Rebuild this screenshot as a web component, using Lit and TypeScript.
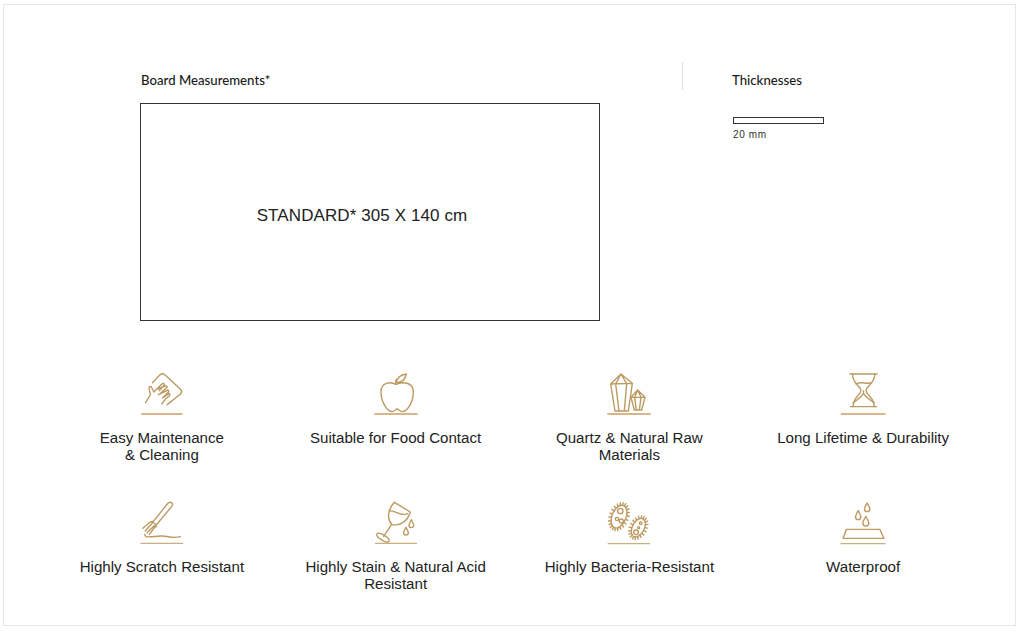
import { LitElement, html, css, svg } from "lit";
import { customElement } from "lit/decorators.js";

const drop = (x: number, top: number, bot: number, r: number) =>
  svg`<path d="M${x} ${top} C${x + r * 0.5} ${top + (bot - top) * 0.3} ${x + r} ${bot - r * 1.6} ${x + r} ${bot - r} A${r} ${r} 0 0 1 ${x - r} ${bot - r} C${x - r} ${bot - r * 1.6} ${x - r * 0.5} ${top + (bot - top) * 0.3} ${x} ${top}Z"/>`;

const microbe = (cx: number, cy: number, rx: number, ry: number, rot: number, n: number) => {
  const spikes = [];
  for (let i = 0; i < n; i++) {
    const a = (i / n) * Math.PI * 2;
    const x1 = cx + rx * Math.cos(a), y1 = cy + ry * Math.sin(a);
    const x2 = cx + (rx + 8) * Math.cos(a), y2 = cy + (ry + 8) * Math.sin(a);
    spikes.push(svg`<line x1=${x1} y1=${y1} x2=${x2} y2=${y2}/>`);
  }
  return svg`<g transform="rotate(${rot} ${cx} ${cy})"><ellipse cx=${cx} cy=${cy} rx=${rx} ry=${ry}/>${spikes}</g>`;
};

interface Feature { lines: string[]; vx: number; vy: number; art: unknown; }

const features: Feature[] = [
  {
    lines: ["Easy Maintenance", "& Cleaning"], vx: 19.5, vy: 0,
    art: svg`
      <path d="M96 68 L118 45 Q126 38 134 45 L180 88 Q187 95 180 102 L140 134"/>
      <path d="M75 128 L90 104 L86 88 Q84 78 92 80 L100 96 L124 72 Q130 68 132 74 L116 92 M108 88 L134 78 Q140 76 140 82 L120 100 M114 104 L142 90 Q146 92 144 96 L126 114 L146 100 Q150 102 146 108 L134 118 L124 132"/>
      <line x1="62" y1="162" x2="186" y2="162" class="base"/>`,
  },
  {
    lines: ["Suitable for Food Contact"], vx: 0, vy: 0,
    art: svg`
      <path d="M105 73 C88 64 60 66 60 96 C60 125 78 155 94 155 C102 155 103 147 108 147 C113 147 115 155 123 155 C140 155 157 125 157 96 C157 66 124 64 105 73Z"/>
      <path d="M104 72 C104 66 104 62 106 58 M106 68 C108 52 120 44 136 42 C133 58 122 68 106 68Z"/>
      <line x1="40" y1="162" x2="170" y2="162" class="base"/>`,
  },
  {
    lines: ["Quartz & Natural Raw", "Materials"], vx: -3, vy: 0,
    art: svg`
      <path d="M78 42 L112 70 L100 153 L60 153 L47 72Z M47 72 L112 70 M78 42 L62 72 L72 153 M78 42 L95 71 L88 153"/>
      <path d="M128 90 L150 112 L140 150 L118 150 L108 112Z M108 112 L150 112 M128 90 L119 112 L124 150 M128 90 L138 112 L133 150" />
      <line x1="37" y1="162" x2="167" y2="162" class="base"/>`,
  },
  {
    lines: ["Long Lifetime & Durability"], vx: -7.5, vy: 0,
    art: svg`
      <path d="M58 42 H140 M60 140 H138"/>
      <path d="M66 42 C66 72 91 78 91 92 C91 106 68 110 68 140 M133 42 C133 72 107 78 107 92 C107 106 131 110 131 140"/>
      <path d="M77 72 C92 62 108 74 122 68 M68 128 C80 120 92 112 99 100 C106 112 120 120 131 128 M99 92 V100"/>
      <line x1="31" y1="162" x2="165" y2="162" class="base"/>`,
  },
  {
    lines: ["Highly Scratch Resistant"], vx: -10.5, vy: -18,
    art: svg`
      <path d="M68 80 L113 24 Q119 19 124 24 Q128 29 124 34 L77 90"/>
      <path d="M60 80 L37 100 M65 85 L44 108 M71 92 L50 113 M77 90 L57 118 M60 80 Q70 78 68 80 M60 80 Q78 84 77 96"/>
      <path d="M43 118 C42 130 62 125 90 123 C115 122 122 132 150 125"/>
      <line x1="30" y1="145" x2="158" y2="145" class="base light"/>`,
  },
  {
    lines: ["Highly Stain & Natural Acid", "Resistant"], vx: 0, vy: -18,
    art: svg`
      <path d="M100 22 L148 51 C140 78 118 95 92 88 C76 70 82 42 100 22Z"/>
      <path d="M85 48 C104 44 116 66 140 56"/>
      <path d="M92 88 L68 124"/>
      <ellipse cx="66" cy="128" rx="21" ry="8" transform="rotate(32 66 128)"/>
      ${drop(151, 74, 98, 7)}
      ${drop(135, 97, 120, 7)}
      <line x1="42" y1="145" x2="168" y2="145" class="base light"/>`,
  },
  {
    lines: ["Highly Bacteria-Resistant"], vx: -3, vy: -18,
    art: svg`
      ${microbe(72, 65, 21, 36, 22, 22)}
      <circle cx="76" cy="48" r="8"/><circle cx="66" cy="72" r="5"/><circle cx="79" cy="78" r="6"/>
      ${microbe(130, 98, 18, 30, 28, 20)}
      <circle cx="137" cy="85" r="4"/><circle cx="131" cy="98" r="3"/><circle cx="123" cy="112" r="7"/>
      <line x1="38" y1="146" x2="165" y2="146" class="base light"/>`,
  },
  {
    lines: ["Waterproof"], vx: -7.5, vy: -18,
    art: svg`
      <path d="M48 103 H148 L160 130 H38Z"/>
      ${drop(110, 24, 50, 8)}
      ${drop(83, 47, 74, 8)}
      ${drop(106, 64, 93, 9)}
      <line x1="30" y1="146" x2="165" y2="146" class="base light"/>`,
  },
];

@customElement("app-root")
export class AppRoot extends LitElement {
  static styles = css`
    :host { display: block; }
    .frame {
      box-sizing: border-box;
      width: 1013px;
      height: 622px;
      margin: 4px 0 0 3px;
      border: 1px solid #e6e6e6;
      background: #fff;
      font-family: "Liberation Sans", Arial, sans-serif;
      color: #222;
    }
    .top { display: flex; padding: 57px 0 0 136px; }
    .board { width: 459px; }
    .heading {
      font-family: "Lato", sans-serif;
      font-size: 13.2px;
      font-weight: 500;
      line-height: 18px;
      color: #1a1a1a;
    }
    .board .heading { padding: 9px 0 14px 1px; }
    .box {
      box-sizing: border-box;
      height: 218px;
      width: 460px;
      border: 1px solid #333;
      display: flex;
      align-items: center;
      justify-content: center;
      padding: 8px 16px 0 0;
      font-size: 17px;
      letter-spacing: 0.1px;
      color: #222;
    }
    .thick { margin-left: 83px; }
    .thick-head {
      box-sizing: border-box;
      height: 28px;
      border-left: 1px solid #e3e3e3;
      padding: 9px 0 0 49px;
    }
    .thick-body { margin: 27px 0 0 51px; }
    .bar { box-sizing: border-box; width: 91px; height: 7px; border: 1px solid #333; }
    .bar-label { font-size: 10px; letter-spacing: 0.6px; line-height: 12px; margin-top: 5px; color: #333; }
    .grid {
      display: grid;
      grid-template-columns: repeat(4, 233.75px);
      grid-auto-rows: 129px;
      margin: 39px 0 0 41px;
    }
    .cell { display: flex; flex-direction: column; align-items: center; }
    svg {
      display: block;
      width: 70px;
      height: 60px;
      fill: none;
      stroke: #bd9a62;
      stroke-width: 4.2;
      stroke-linejoin: round;
      stroke-linecap: round;
    }
    .base { stroke: #c89f62; stroke-width: 4; stroke-linecap: butt; }
    .light { stroke: #c9b083; }
    .label { margin-top: 9px; font-size: 15.1px; line-height: 17px; text-align: center; color: #222; }
  `;

  render() {
    return html`
      <div class="frame">
        <div class="top">
          <div class="board">
            <div class="heading">Board Measurements*</div>
            <div class="box">STANDARD* 305 X 140 cm</div>
          </div>
          <div class="thick">
            <div class="thick-head heading">Thicknesses</div>
            <div class="thick-body">
              <div class="bar"></div>
              <div class="bar-label">20 mm</div>
            </div>
          </div>
        </div>
        <div class="grid">
          ${features.map(
            (f) => html`
              <div class="cell">
                <svg viewBox="${f.vx} ${f.vy} 210 180">${f.art}</svg>
                <div class="label">${f.lines.map((l) => html`<div>${l}</div>`)}</div>
              </div>
            `
          )}
        </div>
      </div>
    `;
  }
}
